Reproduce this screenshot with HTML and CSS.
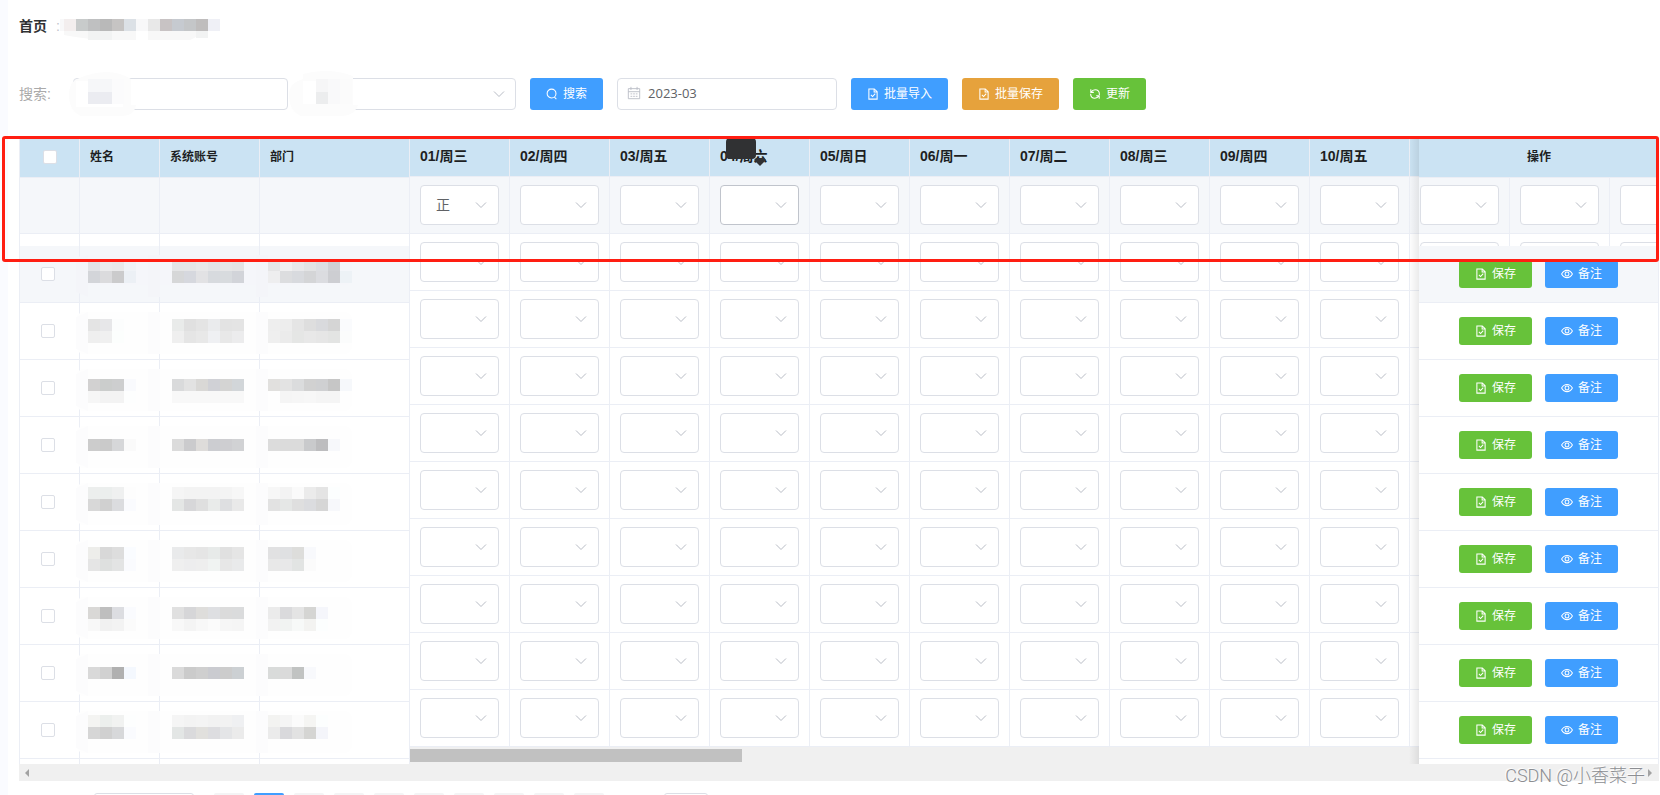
FILE: index.html
```html
<!DOCTYPE html>
<html lang="zh-CN">
<head>
<meta charset="utf-8">
<title>首页</title>
<link rel="stylesheet" href="styles.css">
</head>
<body>
<svg class="sprite" aria-hidden="true">
  <symbol id="i-search" viewBox="0 0 16 16"><circle cx="7.4" cy="7.4" r="5.9"/><path d="M11.2 12.2l2.6 2.6"/></symbol>
  <symbol id="i-doc" viewBox="0 0 16 16"><path d="M2.5 1.2h7.2l3.8 3.8v9.8h-11zM9.5 1.4v3.8h3.8M5.2 9.2l2.2 2.2 3.6-3.8"/></symbol>
  <symbol id="i-refresh" viewBox="0 0 16 16"><path d="M2.600 5.600C4 3.400 6 2.400 8.200 2.400C11.400 2.400 13.800 4.800 13.800 8v1.400M2.400 1.800v4h4M13.400 10.400C12 12.600 10 13.600 7.800 13.600C4.600 13.600 2.200 11.200 2.200 8V7.600M13.600 14.200v-4h-4"/></symbol>
  <symbol id="i-eye" viewBox="0 0 16 16"><path d="M.8 8C2.6 4.800 5.200 3.200 8 3.200S13.400 4.800 15.200 8C13.400 11.200 10.800 12.800 8 12.800S2.600 11.200.8 8z"/><circle cx="8" cy="8" r="2.600"/></symbol>
  <symbol id="i-date" viewBox="0 0 16 16"><path d="M1.500 3h13v11.500h-13zM1.500 6.500h13M4.500 1v3.500M11.500 1v3.500M4 9h2M7 9h2M10 9h2M4 11.800h2M7 11.800h2M10 11.800h2"/></symbol>
  <symbol id="i-down" viewBox="0 0 12 12"><path d="M1 3.500l5 5 5-5"/></symbol>
</svg>

<header class="crumbs">
  <a class="crumbs__home" href="#">首页</a>
  <span class="crumbs__sep">:</span>
  <svg class="crumbs__masked" id="crumb-mask" width="160" height="24" aria-hidden="true"></svg>
</header>

<form class="filters">
  <label class="filters__label" for="kw">搜索:</label>
  <div class="field field--kw">
    <input class="control" id="kw" type="text">
    <svg class="field__mask" width="72" height="46" aria-hidden="true">
      <path fill="#fcfcfc" d="M8 8Q40-6 62 8V34H67Q66 44 54 45H12Q0 40 0 24Q0 12 8 8z"/>
      <path fill="#fff" d="M7 10h47v26H7z"/><path fill="#f6f7f9" d="M19 8h24v13H19z"/><path fill="#ebecf1" d="M19 21h24v12H19z"/><path fill="#fbfbfc" d="M43 8h12v25H43z"/>
    </svg>
  </div>
  <div class="field field--dept">
    <select class="control" aria-label="部门"><option></option></select>
    <svg class="field__arrow"><use href="#i-down"/></svg>
    <svg class="field__mask field__mask--select" width="72" height="46" aria-hidden="true">
      <path fill="#fcfcfc" d="M14 3Q40-4 64 5V34H69Q66 44 54 45H12Q0 40 0 24Q0 12 14 8z"/>
      <path fill="#fff" d="M14 10h14v23H14z"/><path fill="#f6f6f7" d="M27 8h12v13H27z"/><path fill="#ecedee" d="M27 21h12v12H27z"/><path fill="#f9f9fa" d="M39 8h12v25H39z"/><path fill="#fbfbfb" d="M51 8h12v25H51z"/>
    </svg>
  </div>
  <button class="btn btn--blue" type="button"><svg class="icon"><use href="#i-search"/></svg>搜索</button>
  <div class="field field--month">
    <svg class="field__date"><use href="#i-date"/></svg>
    <input class="control control--date" type="text" value="2023-03" aria-label="月份">
  </div>
  <button class="btn btn--blue" type="button"><svg class="icon"><use href="#i-doc"/></svg>批量导入</button>
  <button class="btn btn--orange" type="button"><svg class="icon"><use href="#i-doc"/></svg>批量保存</button>
  <button class="btn btn--green" type="button"><svg class="icon"><use href="#i-refresh"/></svg>更新</button>
</form>

<main class="board">
  <div class="panes">
    <section class="pane-left">
      <table class="grid grid--people">
        <colgroup><col class="c-check"><col class="c-name"><col class="c-account"><col class="c-dept"></colgroup>
        <thead><tr><th class="center"><input class="tick" type="checkbox" aria-label="全选"></th><th>姓名</th><th>系统账号</th><th>部门</th></tr></thead>
        <tbody id="people"></tbody>
      </table>
    </section>
    <section class="pane-days">
      <table class="grid grid--days">
        <thead><tr id="day-heads"></tr></thead>
        <tbody id="days"></tbody>
      </table>
      <div class="track"><div class="track__thumb"></div></div>
    </section>
    <section class="pane-right">
      <div class="pane-right__head">操作</div>
      <ul class="actions" id="actions"></ul>
    </section>
  </div>
  <div class="outer-track"><span class="tri tri--left"></span><span class="tri tri--right"></span></div>
  <div class="tip"></div>
  <svg class="tip-arrow" width="12" height="8"><path fill="#303133" d="M2 0h8l2 2-6 6-6-6z"/></svg>
  <div class="frame"></div>
  <div class="watermark">CSDN @小香菜子</div>
</main>

<nav class="pager" aria-label="分页">
  <select class="pager__size" aria-label="每页条数"><option></option></select>
  <div class="pager__list" id="pager"></div>
  <input class="pager__jump" type="text" aria-label="页码">
</nav>
<script src="app.js"></script>
</body>
</html>
```

FILE: styles.css
```css
* { box-sizing: border-box; }
html { height: 100%; overflow: hidden; }
body {
  margin: 0;
  height: 100%;
  padding: 0 1px 0 19px;
  background: linear-gradient(to right, #fafbff 8px, #fff 8px);
  color: #606266;
  font: 14px/20px "Liberation Sans", "Noto Sans CJK SC", sans-serif;
}
button, input, select { font: inherit; color: inherit; margin: 0; }
.sprite { position: absolute; width: 0; height: 0; }
symbol, .icon, .field__arrow, .field__date { fill: none; stroke: currentColor; }

.crumbs { display: flex; align-items: center; height: 52px; }
.crumbs__home { color: #303133; font-weight: 700; text-decoration: none; }
.crumbs__sep { width: 12px; padding-left: 9px; color: #c0c4cc; }
.crumbs__masked { margin: 10px 0 0 1px; }

.filters { display: flex; align-items: center; gap: 14px; padding-top: 26px; }
.filters__label { width: 40px; color: #aaa; white-space: nowrap; }
.field { position: relative; height: 32px; }
.field--kw { width: 215px; }
.field--dept { width: 214px; }
.field--month { width: 220px; }
.control {
  display: block;
  appearance: none;
  width: 100%;
  height: 32px;
  padding: 0 15px;
  border: 1px solid #dcdfe6;
  border-radius: 4px;
  background: #fff;
  outline: none;
}
.control--date { padding: 0 15px 2px 30px; font-family: "Open Sans", sans-serif; font-size: 13px; }
.field__arrow { position: absolute; right: 11px; top: 50%; width: 12px; height: 12px; margin-top: -6px; color: #b8bcc5; pointer-events: none; }
.field__date { position: absolute; left: 10px; top: 8px; width: 14px; height: 14px; color: #b8bcc5; }
.field__mask { position: absolute; left: -4px; top: -7px; }
.field__mask--select { left: -13px; }

.btn {
  display: inline-flex;
  align-items: center;
  justify-content: center;
  gap: 5px;
  height: 32px;
  padding: 0 16px;
  border: 0;
  border-radius: 3px;
  color: #fff;
  font-size: 12px;
  line-height: 16px;
  white-space: nowrap;
}
.btn--blue { background: #409eff; }
.btn--orange { background: #e6a23c; }
.btn--green { background: #67c23a; }
.btn--small { height: 28px; }
.icon { width: 12px; height: 12px; stroke-width: 1.4; }

.board { position: relative; margin-top: 28px; }
.panes { position: relative; display: flex; height: 626px; }
.pane-left { flex: none; width: 391px; overflow: hidden; }
.pane-days { flex: 1; min-width: 0; overflow: hidden; }
.grid { table-layout: fixed; border-collapse: separate; border-spacing: 0; }
.grid th { background: #cbe3f3; color: #1d1f23; font-weight: 700; text-align: left; }
.grid th, .grid td { padding: 0 10px; border-right: 1px solid #ebeef5; border-bottom: 1px solid #ebeef5; }
.grid th { padding-bottom: 2px; }
.grid--people { width: 391px; border-left: 1px solid #ebeef5; }
.grid--people th { height: 40px; font-size: 12px; }
.grid--people th.center { text-align: center; padding: 0 0 2px; }
.c-check { width: 60px; }
.c-name { width: 80px; }
.c-account { width: 100px; }
.c-dept { width: 150px; }
.row-new td { height: 56px; background: #f5f7fa; }
.row-gap td { height: 12px; border-bottom: 0; }
.row-person td { height: 57px; }
.row-person td:first-child { padding: 0 0 3px 21px; }
.row-person--hover td { background: #f5f7fa; }
.masked { position: relative; }
.masked svg { position: absolute; left: 0; top: 0; overflow: visible; z-index: 1; }
.tick {
  appearance: none;
  display: inline-block;
  vertical-align: middle;
  width: 14px;
  height: 14px;
  border: 1px solid #dcdfe6;
  border-radius: 2px;
  background: #fff;
}

.grid--days { width: 1300px; }
.grid--days th { height: 39px; }
.grid--days td { height: 57px; }
.grid--days tr.first td { background: #f5f7fa; }
.grid--days .control { height: 40px; }
.grid--days .control.active { border-color: #c0c4cc; }
.grid--days .field__arrow { right: 12px; }
.cell { position: relative; }
.track { height: 17px; padding-top: 2px; background: #f0f0f0; }
.track__thumb { width: 332px; height: 13px; background: #c1c1c1; }

.pane-right {
  position: absolute;
  top: 0;
  right: 0;
  bottom: 0;
  display: flex;
  flex-direction: column;
  gap: 68px;
  width: 240px;
  overflow: hidden;
}
.pane-days::after {
  content: "";
  position: absolute;
  top: 0;
  bottom: 0;
  right: 240px;
  width: 10px;
  background: linear-gradient(to left, rgba(0, 0, 0, .08), rgba(0, 0, 0, 0));
}
.pane-right__head {
  flex: none;
  height: 40px;
  border-bottom: 1px solid #ebeef5;
  background: #cbe3f3;
  color: #1d1f23;
  font-size: 12px;
  font-weight: 700;
  line-height: 38px;
  text-align: center;
}
.actions { flex: 1; margin: 0; padding: 0; list-style: none; background: #fff; border-right: 1px solid #ebeef5; }
.actions li { display: flex; justify-content: center; align-items: center; gap: 13px; height: 57px; border-bottom: 1px solid #ebeef5; }
.actions li:first-child { background: #f5f7fa; }

.outer-track { position: relative; display: flex; align-items: center; justify-content: space-between; height: 17px; padding: 0 7px 0 6px; background: #f0f0f0; }
.tri { width: 0; height: 0; border: 4px solid transparent; }
.tri--left { border-right-color: #a3a3a3; border-left: 0; }
.tri--right { border-left-color: #a3a3a3; border-right: 0; }

.tip { position: absolute; left: 707px; top: 0; width: 30px; height: 21px; border-radius: 4px; background: #303133; }
.tip-arrow { position: absolute; left: 735px; top: 20px; }
.frame { position: absolute; z-index: 2; left: -17px; right: 0; top: -2px; height: 126px; border: 3px solid #ff1e12; border-radius: 3px; pointer-events: none; }
.watermark {
  position: absolute;
  right: 14px;
  bottom: -9px;
  color: #8c8e92;
  font: 18px/28px Roboto, "Noto Sans CJK SC", sans-serif;
  font-weight: 300;
  text-shadow: -1px -1px 1px #fff;
}

.pager { display: flex; gap: 20px; padding: 12px 0 0 75px; }
.pager__size, .pager__jump { appearance: none; width: 100px; height: 28px; border: 1px solid #dcdfe6; border-radius: 3px; background: #fff; }
.pager__jump { width: 44px; margin-left: 40px; }
.pager__list { display: flex; gap: 10px; }
.pager__list button { width: 30px; height: 28px; padding: 0; border: 0; border-radius: 2px; background: #f4f4f5; }
.pager__list button.on { background: #409eff; }
```

FILE: app.js
```js
// The columns after the tenth run under the fixed actions column, which covers their headings.
const days = ['01/周三', '02/周四', '03/周五', '04/周六', '05/周日', '06/周一', '07/周二', '08/周三', '09/周四', '10/周五', '', '', ''];

// Masked rows: top of the blocks, then per column the block colours line by line.
const people = [
  { y: 13, name: ['e2e3e6 ebebec e9e9ea f0f3f7', 'd3d5d9 dbdbdd cbcbcc ecf0f5'], account: ['e4e5e6 e5e5e6 e8e8e9 e3e4e6 e6e6e7 e4e4e5', 'd6d7d8 d6d8de e2e2e4 d7dade d8dbde d2d4d9'], dept: ['e5e5e6 f0f0f1 e8e8ea e2e3e4 dcdee2 cfd0d4 f4f6fa', 'eeeeef dcdddf d8dade d4d5d7 dbdce0 cdced2 edf2f6'] },
  { y: 16, name: ['e4e4e4 e7e7e9 fcfdfd', 'efefef f0f0f0 fcfefd'], account: ['e9ebea e0e0e0 e4e4e4 eaebed e3e3e3 e4e4e4', 'efefef e5e5e5 e8e8e8 eff0f3 e8e8e8 ececed'], dept: ['eeeeee ededed e5e5e5 dedede d9dadd d5d5d5 fafbfd', 'efefef ebebeb e5e6e5 e8e8e8 e6e6e6 e3e4e3 fbfcfc'] },
  { y: 19, name: ['d2d1d1 cbcdcc cdcecf f9fafd', 'f6f6f6 f3f3f3 f3f3f3 fdfefe'], account: ['d9dadb e2e2e2 d9d8d6 d0d1d6 d4d4d3 d2d6d9', 'f8f8f8 f8f8f8 f8f8f8 f8f8f8 f8f8f8 f8f8f8'], dept: ['e1e0de e3e3e3 dbdcdd d1d1d1 cfd0d2 c6c6c6 f6f8fb', 'fefefe f5f5f5 f6f6f6 f7f7f7 f5f5f5 f5f5f5'] },
  { y: 22, name: ['cccccc cacaca d6d7d9 fafafa'], account: ['dbdbdb cbcbcd dedcda cccdd1 ceced1 d1d2d4'], dept: ['dcdcdc dbdbdb dbdbdb c9cacc bdbdbf f7f8fb'] },
  { y: 13, name: ['eceeed ebeeed eff0f0 fdfdfd', 'd8d8d8 d0d0d0 dbdcdf fafbfe'], account: ['f5f5f5 f3f3f3 f3f3f3 f3f3f3 f4f4f4 f7f7f7', 'e4e6e5 d7d7d9 dfdfdf e9ebea dedfe1 e9e9e9'], dept: ['f7f7f7 f3f3f3 fafafa ebebeb e4e4e4 fcfefe', 'e2e2e2 e5e7e6 dfdfdf dbdcdf d6d6d6 f7f8fb'] },
  { y: 16, name: ['ededea d8d8d8 dddddd fafcff', 'e5e5e5 dee0df e3e4e4 fafbfe'], account: ['e9eaeb e7e7e7 e5e5e5 e7eae9 e0e0e0 e5e5e5', 'efefef ededee eeeeee f0f3f2 e7e7e7 e9eaeb'], dept: ['e1e1e2 dfe0e2 dddddb f8f9fc', 'e8e8e8 e8e8e9 e2e4e3 fbfbfb'] },
  { y: 19, name: ['d9d8d6 bebebe dcdde1 fafbfe', 'f8f8f8 f1f1f1 f3f3f3 fbfbfb'], account: ['e0e0e0 d6d6d8 dedddb dedfe2 dbdbdb dadbdc', 'f8f8f8 f4f4f4 f8f8f8 fbfbfb f6f6f6 f5f5f5'], dept: ['ebebeb dadadc e4e4e4 d5d5d3 f5f6fb', 'f2f2f2 f1f3f2 f7f9f8 f3f3f1 fcfefe'] },
  { y: 22, name: ['d9d9d9 d1d1d1 b0b0b0 f4f8fe'], account: ['dadada cbcbcb cfcfcf cacbd0 cccccc ccd0d3'], dept: ['d9dbda dadada c1c3c2 f8f9fc'] },
  { y: 13, name: ['f4f4f2 ecefed f1f2f1 fdfefe', 'd6d6d6 d0d0d0 d7d8da fafbfe'], account: ['f5f5f5 f3f3f3 f4f4f4 f2f2f2 f2f2f2 eff0f2', 'e3e6e5 dadadc e1e0dd dddde0 e4e5e7 ebebeb'], dept: ['f3f3f1 f5f5f5 fbfbfb f5f5f3 fcfefe', 'ebebeb d9d9dc e2e2e2 d5d5d3 f4f5fa'] }
];

const blocks = (x, y, lines) => lines.map((line, r) =>
  line.split(' ').map((c, i) =>
    `<rect x="${x + i * 12}" y="${y + r * 12}" width="12" height="12" fill="#${c}"/>`).join('')).join('');

const maskSvg = (p, hover) => {
  const base = hover ? '#f5f6fa' : '#fefefe';
  const tint = hover ? '#f4f5f9' : '#fcfcfd';
  return `<svg width="78" height="56" aria-hidden="true">
    <rect x="-4" y="9" width="276" height="${hover ? 30 : 42}" rx="8" fill="${base}"/>
    <path fill="${tint}" d="M-4 14l12-5v42l-12-5zM68 9h12v42h-12zM176 9h12v42h-12z"/>
    ${blocks(8, p.y, p.name)}${blocks(92, p.y, p.account)}${blocks(188, p.y, p.dept)}</svg>`;
};

document.getElementById('people').innerHTML =
  '<tr class="row-new"><td></td><td></td><td></td><td></td></tr>' +
  '<tr class="row-gap"><td></td><td></td><td></td><td></td></tr>' +
  people.map((p, i) => `<tr class="row-person${i ? '' : ' row-person--hover'}">
    <td><input class="tick" type="checkbox" aria-label="选择第${i + 1}行"></td>
    <td class="masked">${maskSvg(p, i === 0)}</td><td></td><td></td></tr>`).join('') +
  '<tr class="row-gap"><td></td><td></td><td></td><td></td></tr>';

document.getElementById('day-heads').innerHTML = days.map(d => `<th>${d}</th>`).join('');

document.getElementById('days').innerHTML = Array.from({ length: 10 }, (_, r) =>
  `<tr class="${r ? '' : 'first'}">` + days.map((d, c) => `<td><div class="cell">
    <select class="control${r === 0 && c === 3 ? ' active' : ''}" aria-label="${c + 1}日"><option>${r === 0 && c === 0 ? '正' : ''}</option></select>
    <svg class="field__arrow"><use href="#i-down"/></svg></div></td>`).join('') + '</tr>').join('');

document.getElementById('actions').innerHTML = people.map(() => `<li>
  <button class="btn btn--green btn--small" type="button"><svg class="icon"><use href="#i-doc"/></svg>保存</button>
  <button class="btn btn--blue btn--small" type="button"><svg class="icon"><use href="#i-eye"/></svg>备注</button></li>`).join('');

document.getElementById('pager').innerHTML = Array.from({ length: 10 }, (_, i) =>
  `<button type="button" class="${i === 1 ? 'on' : ''}" aria-label="分页按钮${i}"></button>`).join('');

document.getElementById('crumb-mask').innerHTML =
  '<path fill="#f8f8f9" d="M0 0h4v12h-4z"/>' +
  blocks(4, 0, ['f3eeee c8cbcb bfc0c1 b9b9b9 c6c4c3 dce1e6 f8f8f9 e8e8e8 c8c3c4 c6cad0 c4c6c8 bfbdbd eff0f6']) +
  '<path fill="#f8f8f8" d="M4 12h72v9H40Q20 19 4 16zM88 12h60l-12 6-6 3H88z"/><path fill="#f2f3f3" d="M28 12h24v9H28zM136 12h12v7h-12z"/>';
```
